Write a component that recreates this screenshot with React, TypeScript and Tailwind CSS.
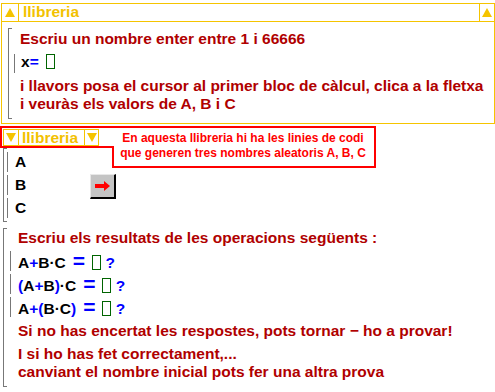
import type { ReactNode } from "react";

// Small filled triangle used in the collapsible block headers
const Tri = ({ down = false }: { down?: boolean }) => (
  <svg width="10" height="9" viewBox="0 0 10 9" className="block">
    {down ? <polygon points="0,0 10,0 5,9" fill="#f5c400" /> : <polygon points="5,0 10,9 0,9" fill="#f5c400" />}
  </svg>
);

// Left bracket that groups the lines of a block
const Bracket = ({ children, className = "" }: { children: ReactNode; className?: string }) => (
  <div className={`flex ${className}`}>
    <div className="w-[4px] shrink-0 border-l border-t border-b border-[#777]" />
    <div className="flex flex-col">{children}</div>
  </div>
);

// A calc line, marked by its own thin bar
const CalcLine = ({ children, className = "" }: { children: ReactNode; className?: string }) => (
  <div className={`flex h-[20px] ${className}`}>
    <div className="w-[8px] shrink-0 border-l border-[#777]" />
    <div className="leading-[20px] whitespace-nowrap">{children}</div>
  </div>
);

const Box = () => <span className="inline-block w-[9px] h-[15px] border border-[#006400] align-[-2px]" />;

const Blue = ({ children }: { children: ReactNode }) => <span className="text-[#0000ff]">{children}</span>;

const Eq = () => <span className="text-[#0000ff] text-[21px] mx-[7px] leading-[20px]">=</span>;

export default function App() {
  return (
    <div
      className="relative w-[495px] h-[392px] bg-white overflow-hidden font-bold text-[15.5px] text-[#b00000]"
      style={{ fontFamily: '"Liberation Sans", Arial, sans-serif' }}
    >
      {/* ========== BLOCK 1 (expanded library) ========== */}
      <div className="mt-[3px] ml-[1px] w-[494px] h-[121px] border border-[#f5c400] flex flex-col">
        <div className="flex h-[18px] shrink-0 border-b border-[#f5c400]">
          <div className="w-[17px] border-r border-[#f5c400] flex items-center justify-center">
            <Tri />
          </div>
          <div className="pl-[4px] text-[#f2c100] leading-[14px] pt-[1px]">llibreria</div>
          <div className="flex-1" />
          <div className="w-[15px] border-l border-[#f5c400] flex items-center justify-center">
            <Tri />
          </div>
        </div>

        <Bracket className="ml-[6px] mt-[6px] h-[91px]">
          <div className="pl-[8px] leading-[22px] whitespace-nowrap">Escriu un nombre enter entre 1 i 66666</div>
          <div className="flex h-[19px] mt-[4px]">
            <div className="w-[7px] ml-[2px] shrink-0 border-l border-[#777]" />
            <div className="leading-[16px] text-black">
              x<Blue>=</Blue>
              <span className="ml-[7px]">
                <Box />
              </span>
            </div>
          </div>
          <div className="pl-[8px] mt-[4px] leading-[18px] whitespace-nowrap">
            i llavors posa el cursor al primer bloc de càlcul, clica a la fletxa
            <br />i veuràs els valors de A, B i C
          </div>
        </Bracket>
      </div>

      {/* ========== BLOCK 2 (collapsed library + A, B, C) ========== */}
      <div className="mt-[5px] ml-[3px] w-[96px] h-[17px] border border-[#f5c400] flex">
        <div className="w-[15px] border-r border-[#f5c400] flex items-center justify-center">
          <Tri down />
        </div>
        <div className="w-[65px] pl-[3px] text-[#f2c100] leading-[14px] pt-[1px]">llibreria</div>
        <div className="flex-1 border-l border-[#f5c400] flex items-center justify-center">
          <Tri down />
        </div>
      </div>

      <div className="flex items-center mt-[2px]">
        <Bracket className="ml-[3px] w-[84px] h-[74px]">
          <CalcLine className="mt-[4px] text-black">A</CalcLine>
          <CalcLine className="mt-[3px] text-black">B</CalcLine>
          <CalcLine className="mt-[3px] text-black">C</CalcLine>
        </Bracket>
        <button className="ml-[3px] mt-[2px] w-[26px] h-[25px] bg-[#c4c4c4] border-t border-l border-[#e8e8e8] border-r-2 border-b-2 border-r-black border-b-black flex items-center justify-center">
          <svg width="15" height="10" viewBox="0 0 15 10">
            <rect x="0" y="3" width="10" height="4" fill="#ff0000" />
            <polygon points="9,0 15,5 9,10" fill="#ff0000" />
          </svg>
        </button>
      </div>

      {/* ========== BLOCK 3 (questions) ========== */}
      <Bracket className="ml-[3px] mt-[6px] h-[159px]">
        <div className="pl-[11px] leading-[20px] whitespace-nowrap">Escriu els resultats de les operacions següents :</div>
        <div className="ml-[3px] text-black">
          <CalcLine className="mt-[3px]">
            A<Blue>+</Blue>B·C<Eq /><Box /> <Blue>?</Blue>
          </CalcLine>
          <CalcLine className="mt-[3px]">
            <Blue>(</Blue>A<Blue>+</Blue>B<Blue>)</Blue>·C<Eq /><Box /> <Blue>?</Blue>
          </CalcLine>
          <CalcLine className="mt-[3px]">
            A<Blue>+</Blue><Blue>(</Blue>B·C<Blue>)</Blue><Eq /><Box /> <Blue>?</Blue>
          </CalcLine>
        </div>
        <div className="pl-[11px] mt-[4px] leading-[20px] whitespace-nowrap">Si no has encertat les respostes, pots tornar − ho a provar!</div>
        <div className="pl-[11px] mt-[4px] leading-[18px] whitespace-nowrap">
          I si ho has fet correctament,...
          <br />
          canviant el nombre inicial pots fer una altra prova
        </div>
      </Bracket>

      {/* ========== TOOLTIP OVERLAY ========== */}
      <div className="absolute left-0 top-[126px] w-[114px] h-[22px] border-2 border-r-0 border-[#ff0000]" />
      <div className="absolute left-[112px] top-[126px] w-[264px] h-[42px] border-2 border-l-0 border-[#ff0000] bg-white text-[#ff0000] text-[12px] leading-[15px] text-center pt-[3px] whitespace-nowrap">
        En aquesta llibreria hi ha les linies de codi
        <br />
        que generen tres nombres aleatoris A, B, C
      </div>
      <div className="absolute left-[112px] top-[146px] w-[2px] h-[22px] bg-[#ff0000]" />
    </div>
  );
}
